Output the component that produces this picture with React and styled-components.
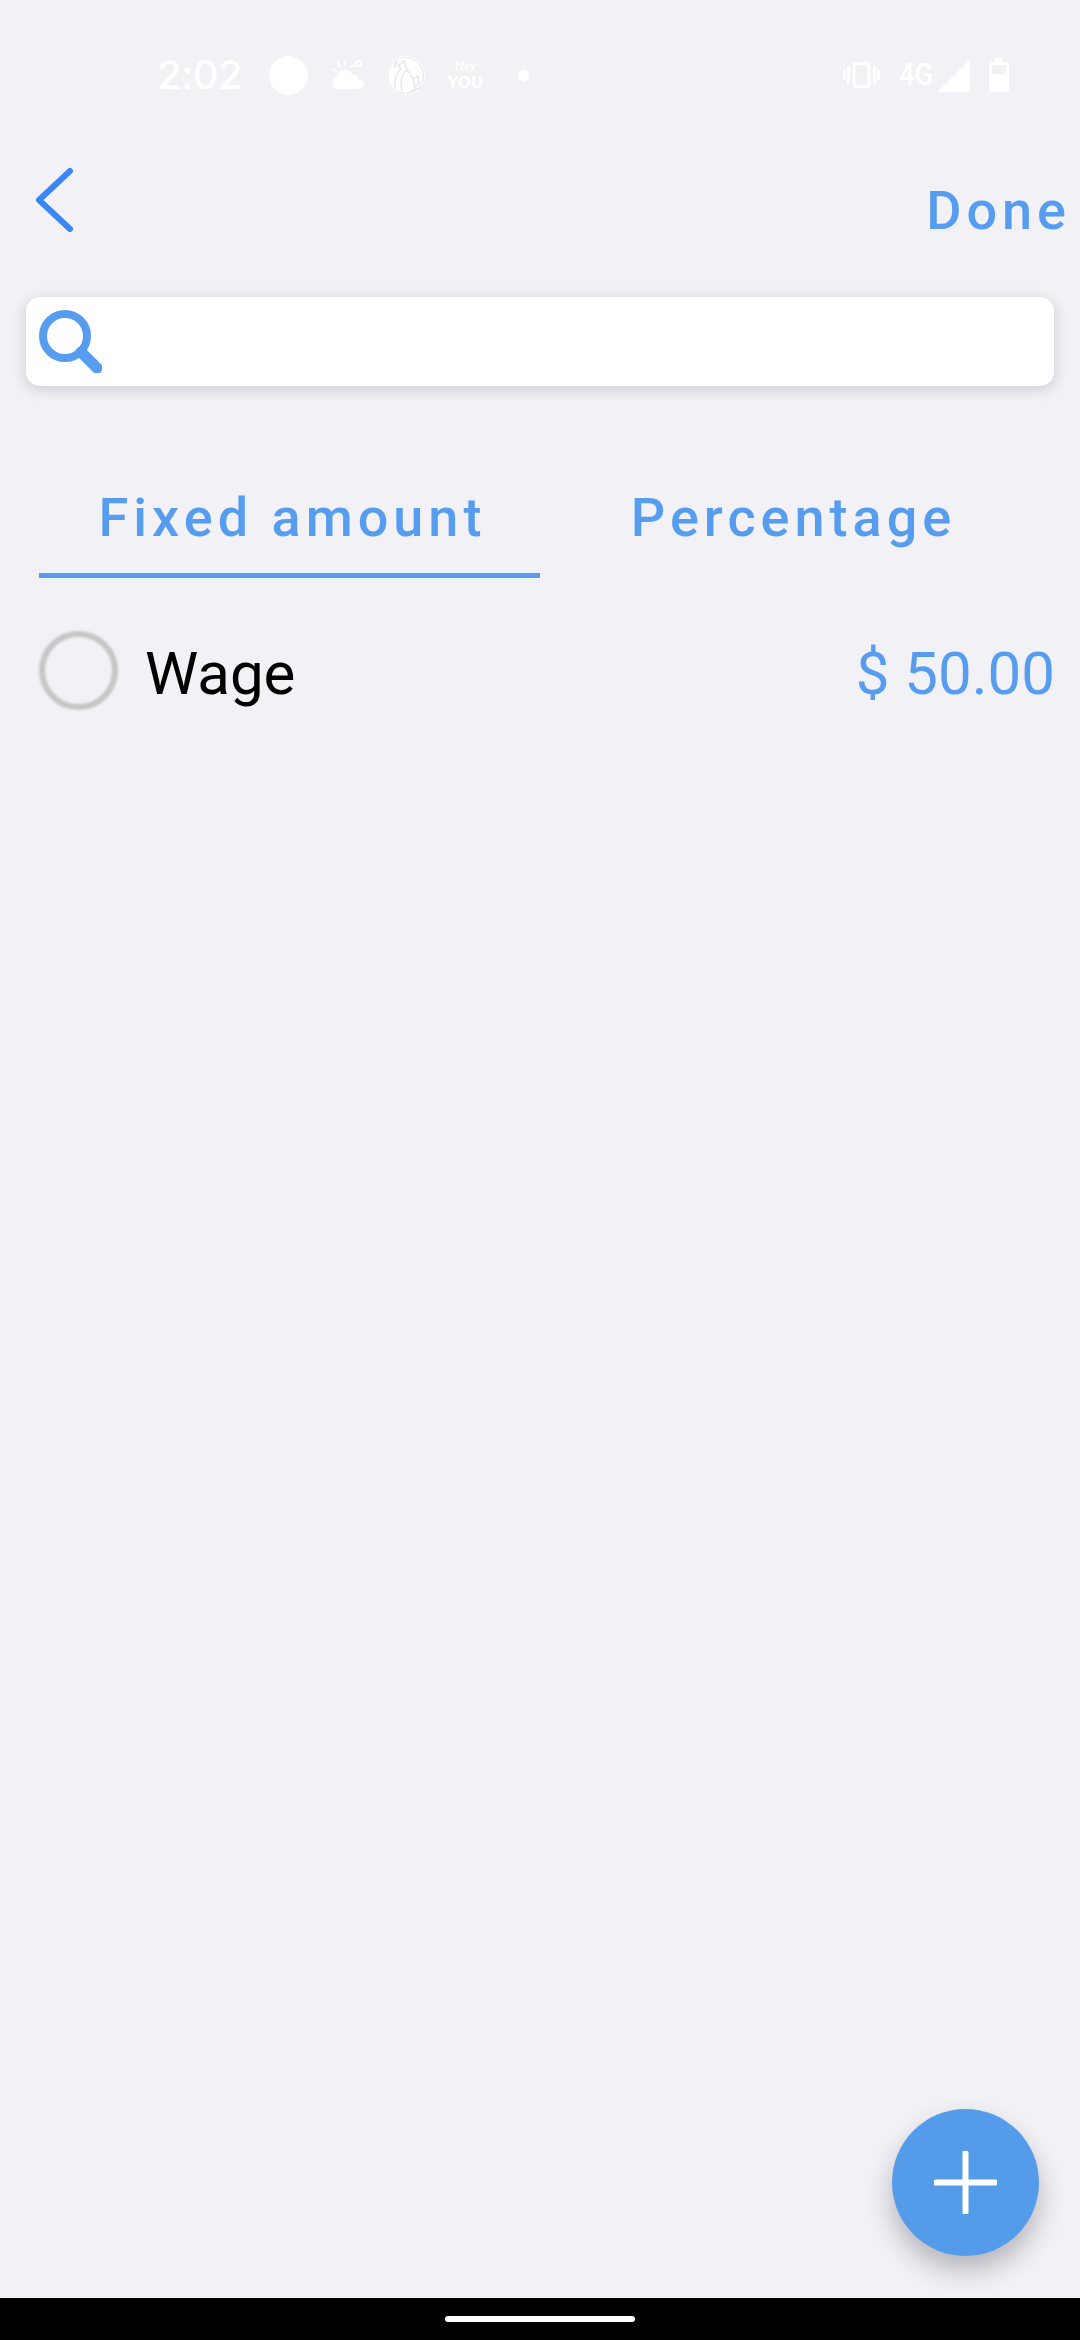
import React from "react";
import styled, { createGlobalStyle } from "styled-components";

const BLUE = "#569df0";
const BG = "#f1f1f6";

const GlobalStyle = createGlobalStyle`
  html, body {
    margin: 0;
    padding: 0;
    background: ${BG};
  }
  * {
    box-sizing: border-box;
  }
`;

const Screen = styled.div`
  position: relative;
  width: 1080px;
  height: 2340px;
  display: flex;
  flex-direction: column;
  overflow: hidden;
  background: ${BG};
  font-family: Roboto, "Liberation Sans", sans-serif;
`;

const StatusBar = styled.div`
  height: 110px;
  flex: none;
  display: flex;
  align-items: center;
  justify-content: space-between;
  padding: 40px 71px 0 157px;
  color: #fff;
`;

const StatusGroup = styled.div`
  display: flex;
  align-items: center;
`;

const Time = styled.span`
  width: 112px;
  font-size: 40px;
  line-height: 40px;
  font-weight: 500;
  font-family: Inter, Roboto, sans-serif;
  letter-spacing: -0.5px;
  color: #fff;
`;

const Dot = styled.span`
  display: block;
  flex: none;
  width: ${(p) => p.$size}px;
  height: ${(p) => p.$size}px;
  margin-left: ${(p) => p.$left}px;
  border-radius: 50%;
  background: #fff;
`;

const IconSlot = styled.svg`
  display: block;
  flex: none;
  margin-left: ${(p) => p.$left || 0}px;
`;

const HeyYou = styled.div`
  width: 40px;
  margin-left: 20px;
  display: flex;
  flex-direction: column;
  align-items: center;
  color: #fff;
`;

const HeyText = styled.span`
  font-family: "Liberation Serif", serif;
  font-style: italic;
  font-weight: 700;
  font-size: 13px;
  line-height: 15px;
`;

const YouText = styled.span`
  font-family: "DejaVu Sans", "Liberation Sans", sans-serif;
  font-weight: 700;
  font-size: 16px;
  line-height: 19px;
  letter-spacing: -0.5px;
`;

const NetworkLabel = styled.span`
  margin-left: 19px;
  width: 38px;
  font-size: 31px;
  line-height: 32px;
  font-weight: 500;
  color: #fff;
  transform: scaleX(0.88);
  transform-origin: left center;
`;

const Header = styled.div`
  height: 187px;
  flex: none;
  display: flex;
  justify-content: space-between;
  padding: 57px 9px 0 34px;
`;

const DoneText = styled.span`
  margin-top: 14px;
  font-size: 54px;
  line-height: 60px;
  font-weight: 500;
  letter-spacing: 5px;
  color: ${BLUE};
`;

const SearchBox = styled.div`
  flex: none;
  height: 89px;
  margin: 0 26px;
  padding: 13px 13px;
  border-radius: 14px;
  background: #fff;
  box-shadow: 0 3px 14px rgba(60, 60, 80, 0.22);
`;

const Tabs = styled.div`
  flex: none;
  display: flex;
  margin-top: 90px;
  padding: 0 39px;
`;

const Tab = styled.div`
  width: 501px;
  height: 102px;
  display: flex;
  align-items: flex-start;
  justify-content: center;
  padding-left: 6px;
  font-size: 54px;
  line-height: 84px;
  font-weight: 500;
  letter-spacing: 5px;
  color: ${BLUE};
  border-bottom: 5px solid ${(p) => (p.$active ? BLUE : "transparent")};
`;

const Row = styled.div`
  flex: none;
  display: flex;
  align-items: center;
  margin-top: 53px;
  padding: 0 25px 0 39px;
`;

const Radio = styled.span`
  display: block;
  flex: none;
  width: 79px;
  height: 79px;
  border-radius: 50%;
  border: 6px solid #c6c6c6;
  filter: blur(0.8px);
`;

const RowLabel = styled.span`
  flex: 1;
  margin: 5px 0 0 27px;
  font-size: 60px;
  line-height: 73px;
  color: #000;
`;

const RowAmount = styled.span`
  margin-top: 5px;
  font-size: 60px;
  line-height: 73px;
  color: ${BLUE};
`;

const Spacer = styled.div`
  flex: 1;
`;

const Fab = styled.div`
  position: absolute;
  right: 41px;
  bottom: 84px;
  width: 147px;
  height: 147px;
  display: flex;
  align-items: center;
  justify-content: center;
  border-radius: 50%;
  background: #549ce9;
  box-shadow: 0 14px 26px rgba(40, 40, 50, 0.3);
`;

const NavBar = styled.div`
  flex: none;
  height: 42px;
  display: flex;
  align-items: center;
  justify-content: center;
  background: #000;
`;

const HomePill = styled.span`
  display: block;
  width: 190px;
  height: 6px;
  border-radius: 3px;
  background: #fff;
`;

const WeatherIcon = () => (
  <IconSlot $left={24} width="32" height="30" viewBox="0 0 32 30">
    <g stroke="#fff" strokeWidth="2" strokeLinecap="round" fill="none">
      <path d="M1 9l3 2M6 2l2 4M13 0.500v4M19 7l3-2" />
      <circle cx="26.500" cy="3.500" r="2.600" />
    </g>
    <path
      fill="#fff"
      d="M5 29a4.500 4.500 0 0 1-3-8 4 4 0 0 1 3-4 8 8 0 0 1 15-3 7 7 0 0 1 7 6 4.500 4.500 0 0 1 0 9z"
    />
  </IconSlot>
);

const GlobeIcon = () => (
  <IconSlot $left={22} width="39" height="39" viewBox="0 0 39 39">
    <circle cx="19.500" cy="19.500" r="19.500" fill="#fff" />
    <circle cx="19.500" cy="19.500" r="18" fill="none" stroke="#e4e4ea" strokeWidth="1" />
    <g fill="none" stroke="#e6e6ec" strokeWidth="1.400">
      <path d="M8 12l2-6 5 7c-5 4-7 11-6 20" />
      <path d="M12 10l6-5 3 9c-6 4-7 13-5 21" />
      <path d="M27 23l5-3 1 7-4 4" />
      <path d="M21 14c5 4 8 12 8 21" />
      <path d="M25 35l9-3" />
    </g>
  </IconSlot>
);

const VibrateIcon = () => (
  <IconSlot width="37" height="26" viewBox="0 0 37 26">
    <rect x="11" y="1.500" width="15" height="23" rx="2" fill="none" stroke="#fff" strokeWidth="3" />
    <path d="M5.500 4v18M1.500 8v10M31.500 4v18M35.500 8v10" stroke="#fff" strokeWidth="3" fill="none" />
  </IconSlot>
);

const SignalIcon = () => (
  <IconSlot width="33" height="33" viewBox="0 0 33 33">
    <path d="M33 0v33H0z" fill="#fff" />
  </IconSlot>
);

const BatteryIcon = () => (
  <IconSlot $left={19} width="20" height="34" viewBox="0 0 20 34">
    <path
      fill="#fff"
      fillRule="evenodd"
      d="M6 0h8v4h5a1 1 0 0 1 1 1v28a1 1 0 0 1-1 1H1a1 1 0 0 1-1-1V5a1 1 0 0 1 1-1h5zM3 7v9h14V7z"
    />
  </IconSlot>
);

const BackIcon = () => (
  <svg width="42" height="70" viewBox="0 0 42 70" style={{ display: "block" }}>
    <path d="M36 4L5 33 36 62" fill="none" stroke="#3a86f6" strokeWidth="6" strokeLinecap="round" strokeLinejoin="round" />
  </svg>
);

const SearchIcon = () => (
  <svg width="63" height="63" viewBox="0 0 63 63" style={{ display: "block" }}>
    <circle cx="26" cy="26" r="22" fill="none" stroke={BLUE} strokeWidth="8" />
    <path d="M42 42l16 16" fill="none" stroke={BLUE} strokeWidth="11" strokeLinecap="round" />
  </svg>
);

const PlusIcon = () => (
  <svg width="63" height="63" viewBox="0 0 63 63" style={{ display: "block" }}>
    <path d="M31.500 2v59M2 31.500h59" fill="none" stroke="#fff" strokeWidth="6" strokeLinecap="round" />
  </svg>
);

export default function App() {
  return (
    <>
      <GlobalStyle />
      <Screen>
        <StatusBar>
          <StatusGroup>
            <Time>2:02</Time>
            <Dot $size={39} $left={0} />
            <WeatherIcon />
            <GlobeIcon />
            <HeyYou>
              <HeyText>Hey</HeyText>
              <YouText>YOU</YouText>
            </HeyYou>
            <Dot $size={11} $left={33} />
          </StatusGroup>
          <StatusGroup>
            <VibrateIcon />
            <NetworkLabel>4G</NetworkLabel>
            <SignalIcon />
            <BatteryIcon />
          </StatusGroup>
        </StatusBar>
        <Header>
          <BackIcon />
          <DoneText>Done</DoneText>
        </Header>
        <SearchBox>
          <SearchIcon />
        </SearchBox>
        <Tabs>
          <Tab $active>Fixed amount</Tab>
          <Tab>Percentage</Tab>
        </Tabs>
        <Row>
          <Radio />
          <RowLabel>Wage</RowLabel>
          <RowAmount>$ 50.00</RowAmount>
        </Row>
        <Spacer />
        <Fab>
          <PlusIcon />
        </Fab>
        <NavBar>
          <HomePill />
        </NavBar>
      </Screen>
    </>
  );
}
